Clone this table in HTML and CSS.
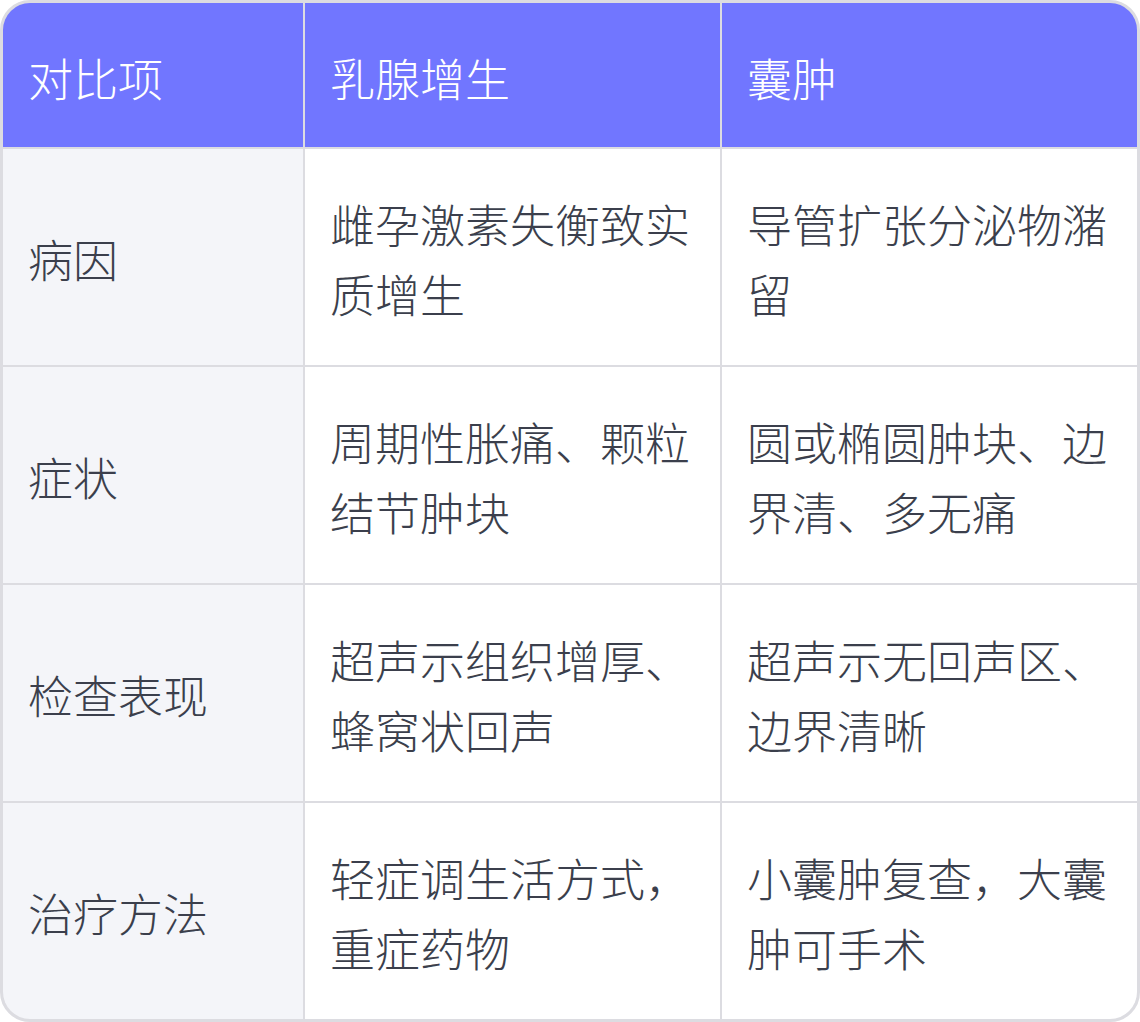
FILE: index.html
```html
<!DOCTYPE html>
<html lang="zh-CN">
<head>
<meta charset="utf-8">
<link rel="stylesheet" href="styles.css">
</head>
<body>
<div class="table">
  <div class="cell head">对比项</div>
  <div class="cell head">乳腺增生</div>
  <div class="cell head">囊肿</div>

  <div class="cell label">病因</div>
  <div class="cell">雌孕激素失衡致实质增生</div>
  <div class="cell">导管扩张分泌物潴留</div>

  <div class="cell label">症状</div>
  <div class="cell">周期性胀痛、颗粒结节肿块</div>
  <div class="cell">圆或椭圆肿块、边界清、多无痛</div>

  <div class="cell label">检查表现</div>
  <div class="cell">超声示组织增厚、蜂窝状回声</div>
  <div class="cell">超声示无回声区、边界清晰</div>

  <div class="cell label">治疗方法</div>
  <div class="cell">轻症调生活方式，重症药物</div>
  <div class="cell">小囊肿复查，大囊肿可手术</div>
</div>
</body>
</html>
```

FILE: styles.css
```css
html, body {
  margin: 0;
  padding: 0;
  background: #ffffff;
}

.table {
  box-sizing: border-box;
  width: 1140px;
  height: 1022px;
  border: 3px solid #dcdce1;
  border-radius: 30px;
  overflow: hidden;
  display: grid;
  grid-template-columns: 300px 415px 415px;
  grid-template-rows: 144px repeat(4, 216px);
  gap: 2px;
  background: #dcdce1;
  font-family: "Noto Sans CJK SC", "Noto Sans", sans-serif;
  font-weight: 300;
  font-size: 45px;
  line-height: 70px;
  color: #3b3f4c;
}

.cell {
  background: #ffffff;
  display: flex;
  align-items: center;
  padding: 4px 18px 0 25px;
  box-sizing: border-box;
}

.head {
  background: #7176ff;
  color: #ffffff;
  padding-top: 6px;
}

.label {
  background: #f4f5f9;
}
```
